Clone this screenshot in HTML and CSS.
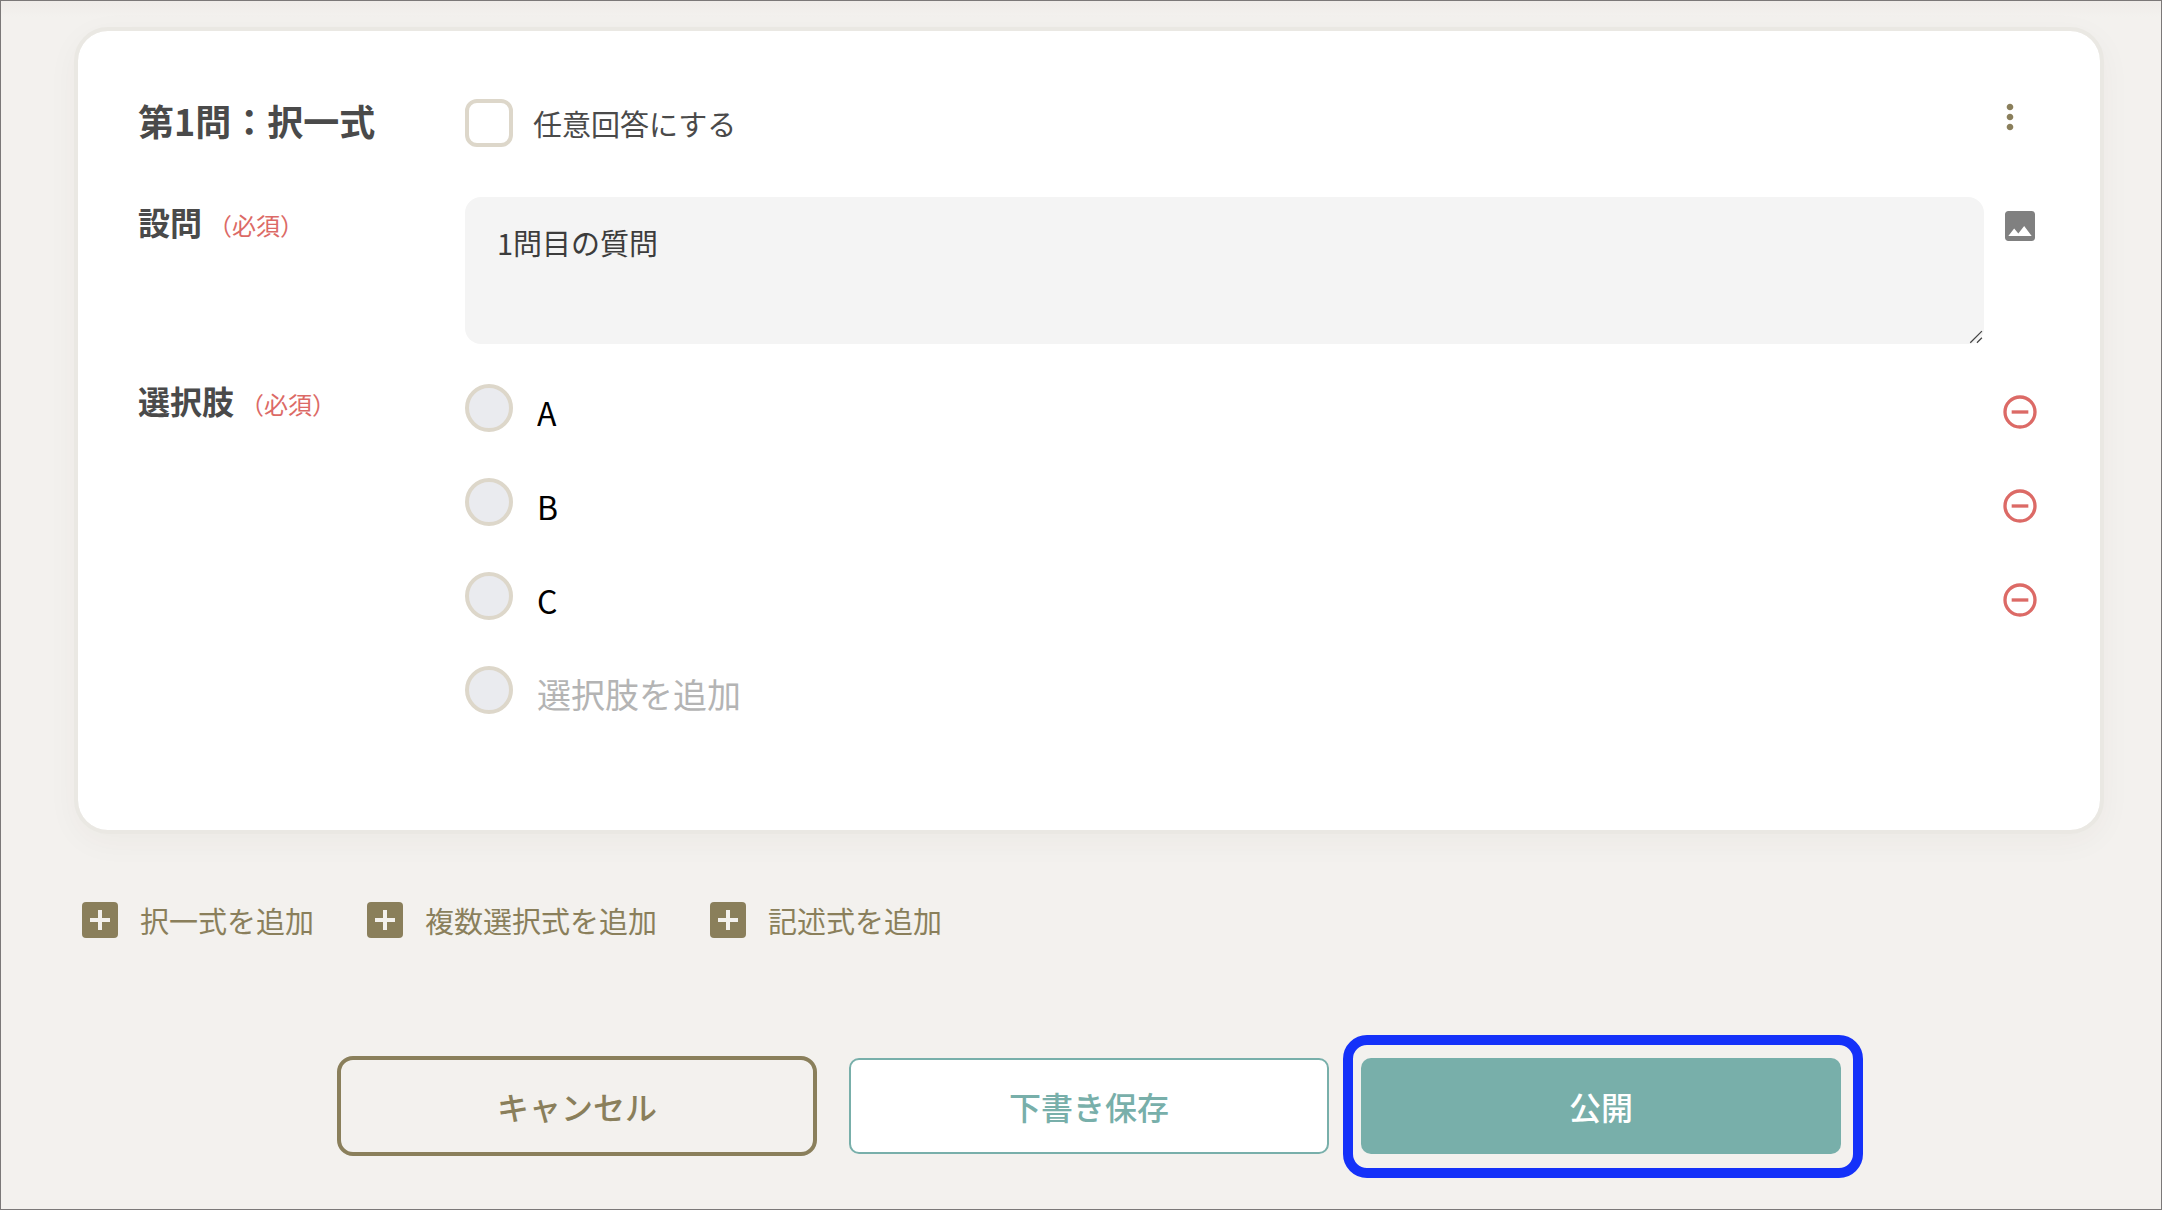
FILE: index.html
```
<!DOCTYPE html>
<html lang="ja">
<head>
  <meta charset="UTF-8">
  <meta name="viewport" content="width=device-width, initial-scale=1.0">
  <title>アンケート作成</title>
  <link rel="stylesheet" href="styles.css">
</head>
<body>
  <form class="page">
    <section class="card">
      <div class="row question-header">
        <h2 class="question-title">第1問：択一式</h2>
        <div class="optional">
          <input type="checkbox" id="optional" class="check">
          <label for="optional">任意回答にする</label>
        </div>
        <button type="button" class="icon-btn menu-btn" aria-label="メニュー">
          <svg viewBox="0 0 24 24" width="40" height="40" fill="currentColor"><path d="M12 8c1.100 0 2-.9 2-2s-.9-2-2-2-2 .9-2 2 .9 2 2 2zm0 2c-1.100 0-2 .9-2 2s.9 2 2 2 2-.9 2-2-.9-2-2-2zm0 6c-1.100 0-2 .9-2 2s.9 2 2 2 2-.9 2-2-.9-2-2-2z"/></svg>
        </button>
      </div>

      <div class="row">
        <label class="field-label" for="question">設問<span class="required">（必須）</span></label>
        <div class="question-field">
          <textarea id="question" class="question-text">1問目の質問</textarea>
          <button type="button" class="icon-btn image-btn" aria-label="画像を追加">
            <svg viewBox="0 0 24 24" width="40" height="40" fill="currentColor"><path d="M21 19V5c0-1.100-.9-2-2-2H5c-1.100 0-2 .9-2 2v14c0 1.100.9 2 2 2h14c1.100 0 2-.9 2-2zM8.500 13.500l2.500 3.010L14.500 12l4.500 6H5l3.500-4.500z"/></svg>
          </button>
        </div>
      </div>

      <div class="row options-row">
        <div class="field-label">選択肢<span class="required">（必須）</span></div>
        <ul class="options">
          <li class="option">
            <input type="radio" name="choice" class="radio" aria-label="選択肢1" disabled>
            <input type="text" class="option-text" value="A" aria-label="選択肢1の内容">
            <button type="button" class="icon-btn remove-btn" aria-label="選択肢1を削除">
              <svg viewBox="0 0 24 24" width="40" height="40" fill="none" stroke="currentColor" stroke-width="2"><circle cx="12" cy="12" r="9"/><path d="M7 12h10"/></svg>
            </button>
          </li>
          <li class="option">
            <input type="radio" name="choice" class="radio" aria-label="選択肢2" disabled>
            <input type="text" class="option-text" value="B" aria-label="選択肢2の内容">
            <button type="button" class="icon-btn remove-btn" aria-label="選択肢2を削除">
              <svg viewBox="0 0 24 24" width="40" height="40" fill="none" stroke="currentColor" stroke-width="2"><circle cx="12" cy="12" r="9"/><path d="M7 12h10"/></svg>
            </button>
          </li>
          <li class="option">
            <input type="radio" name="choice" class="radio" aria-label="選択肢3" disabled>
            <input type="text" class="option-text" value="C" aria-label="選択肢3の内容">
            <button type="button" class="icon-btn remove-btn" aria-label="選択肢3を削除">
              <svg viewBox="0 0 24 24" width="40" height="40" fill="none" stroke="currentColor" stroke-width="2"><circle cx="12" cy="12" r="9"/><path d="M7 12h10"/></svg>
            </button>
          </li>
          <li class="option">
            <input type="radio" name="choice" class="radio" aria-label="新しい選択肢" disabled>
            <input type="text" class="option-text" placeholder="選択肢を追加" aria-label="選択肢を追加">
          </li>
        </ul>
      </div>
    </section>

    <div class="add-buttons">
      <button type="button" class="add-btn">
        <svg viewBox="0 0 48 48" width="48" height="48"><rect x="6" y="6" width="36" height="36" rx="4" fill="currentColor"/><path d="M14 24h20M24 14v20" stroke="#f3f1ee" stroke-width="4"/></svg>
        択一式を追加
      </button>
      <button type="button" class="add-btn">
        <svg viewBox="0 0 48 48" width="48" height="48"><rect x="6" y="6" width="36" height="36" rx="4" fill="currentColor"/><path d="M14 24h20M24 14v20" stroke="#f3f1ee" stroke-width="4"/></svg>
        複数選択式を追加
      </button>
      <button type="button" class="add-btn">
        <svg viewBox="0 0 48 48" width="48" height="48"><rect x="6" y="6" width="36" height="36" rx="4" fill="currentColor"/><path d="M14 24h20M24 14v20" stroke="#f3f1ee" stroke-width="4"/></svg>
        記述式を追加
      </button>
    </div>

    <div class="actions">
      <button type="button" class="btn btn-cancel">キャンセル</button>
      <button type="button" class="btn btn-draft">下書き保存</button>
      <div class="highlight">
        <button type="submit" class="btn btn-publish">公開</button>
      </div>
    </div>
  </form>
</body>
</html>
```
FILE: styles.css
```
* {
  box-sizing: border-box;
}
body {
  margin: 0;
  background-color: #f3f1ee;
  color: #4a4a4a;
  font-family: "Noto Sans CJK JP", sans-serif;
  font-size: 29px;
}
button, input, textarea {
  font-family: inherit;
  font-size: inherit;
  color: inherit;
}
button {
  padding: 0;
  border: none;
  background: none;
  cursor: pointer;
}
svg {
  display: block;
}
.page {
  min-height: 100vh;
  padding: 26px 57px 24px 73px;
  border: 1px solid #7b7878;
  background: linear-gradient(#efece9, #f3f1ee 16px);
}

/* Question card */
.card {
  padding: 66px 60px 116px;
  border: 4px solid #eae8e3;
  border-radius: 34px;
  background-color: #fff;
  background-clip: padding-box;
  box-shadow: 0 8px 32px rgba(70, 40, 20, 0.04);
}
.row {
  display: grid;
  grid-template-columns: 327px 1fr;
}
.question-header {
  grid-template-columns: 327px 1fr auto;
  margin-bottom: 50px;
}
.question-title {
  margin: 0;
  font-size: 36px;
  font-weight: 700;
  line-height: 46px;
}
.optional {
  display: flex;
  align-items: center;
  gap: 20px;
  padding-top: 2px;
  line-height: 48px;
}
.check, .radio {
  appearance: none;
  flex: none;
  width: 48px;
  height: 48px;
  margin: 0;
  border: 4px solid #ddd7ca;
}
.check {
  border-radius: 12px;
  background-color: #fff;
}
.radio {
  border-radius: 50%;
  background-color: #eaebef;
}
.icon-btn {
  flex: none;
  width: 40px;
  height: 40px;
}
.menu-btn {
  margin-right: 10px;
  color: #8a7f5b;
}
.field-label {
  font-size: 32px;
  font-weight: 700;
  line-height: 48px;
}
.required {
  margin-left: 6px;
  color: #dc6a66;
  font-size: 24px;
  font-weight: 400;
}
.question-field {
  display: flex;
  gap: 16px;
}
.question-text {
  flex: 1;
  height: 147px;
  padding: 24px 32px;
  border: none;
  border-radius: 16px;
  outline: none;
  background-color: #f4f4f4;
  color: #3c3c3c;
  line-height: 42px;
  resize: vertical;
}
.question-text::-webkit-scrollbar {
  width: 18px;
  height: 18px;
}
.question-text::-webkit-resizer {
  background: url("data:image/svg+xml,%3Csvg xmlns='http://www.w3.org/2000/svg' viewBox='0 0 18 18'%3E%3Cpath d='M1.500 16.500l14-14M9.500 16.500l6-6' stroke='%23444' stroke-width='1.500'/%3E%3C/svg%3E") no-repeat;
}
.image-btn {
  margin-top: 9px;
  color: #808080;
}
.options-row {
  margin-top: 40px;
}
.options-row .field-label {
  margin-top: -8px;
}

/* Choices */
.options {
  display: flex;
  flex-direction: column;
  gap: 46px;
  margin: 0;
  padding: 0;
  list-style: none;
}
.option {
  display: flex;
  align-items: flex-end;
  gap: 24px;
  height: 48px;
}
.option-text {
  flex: 1;
  min-width: 0;
  height: 40px;
  padding: 0;
  border: none;
  outline: none;
  background: none;
  color: #000;
  font-size: 32px;
}
.option-text::placeholder {
  color: #b4b4b4;
  font-size: 34px;
}
.remove-btn {
  color: #dc6a66;
}

/* Add question */
.add-buttons {
  display: flex;
  flex-wrap: wrap;
  gap: 47px;
  margin-top: 62px;
  padding-left: 2px;
}
.add-btn {
  display: flex;
  align-items: center;
  gap: 16px;
  color: #8a7f5b;
}

/* Form actions */
.actions {
  display: flex;
  justify-content: center;
  align-items: center;
  gap: 32px;
  margin-top: 112px;
}
.btn {
  width: 480px;
  height: 96px;
  border-radius: 10px;
  font-size: 32px;
  font-weight: 500;
}
.btn-cancel {
  height: 100px;
  border: 4px solid #8a7f5b;
  border-radius: 16px;
  color: #8a7f5b;
}
.btn-draft {
  border: 2px solid #78afaa;
  background-color: #fff;
  color: #78afaa;
}
.btn-publish {
  background-color: #78afaa;
  color: #fff;
}
.highlight {
  position: relative;
}
.highlight::after {
  content: "";
  position: absolute;
  inset: -23px -22px -24px -18px;
  border: 10px solid #1431f9;
  border-radius: 24px;
  pointer-events: none;
}
```
